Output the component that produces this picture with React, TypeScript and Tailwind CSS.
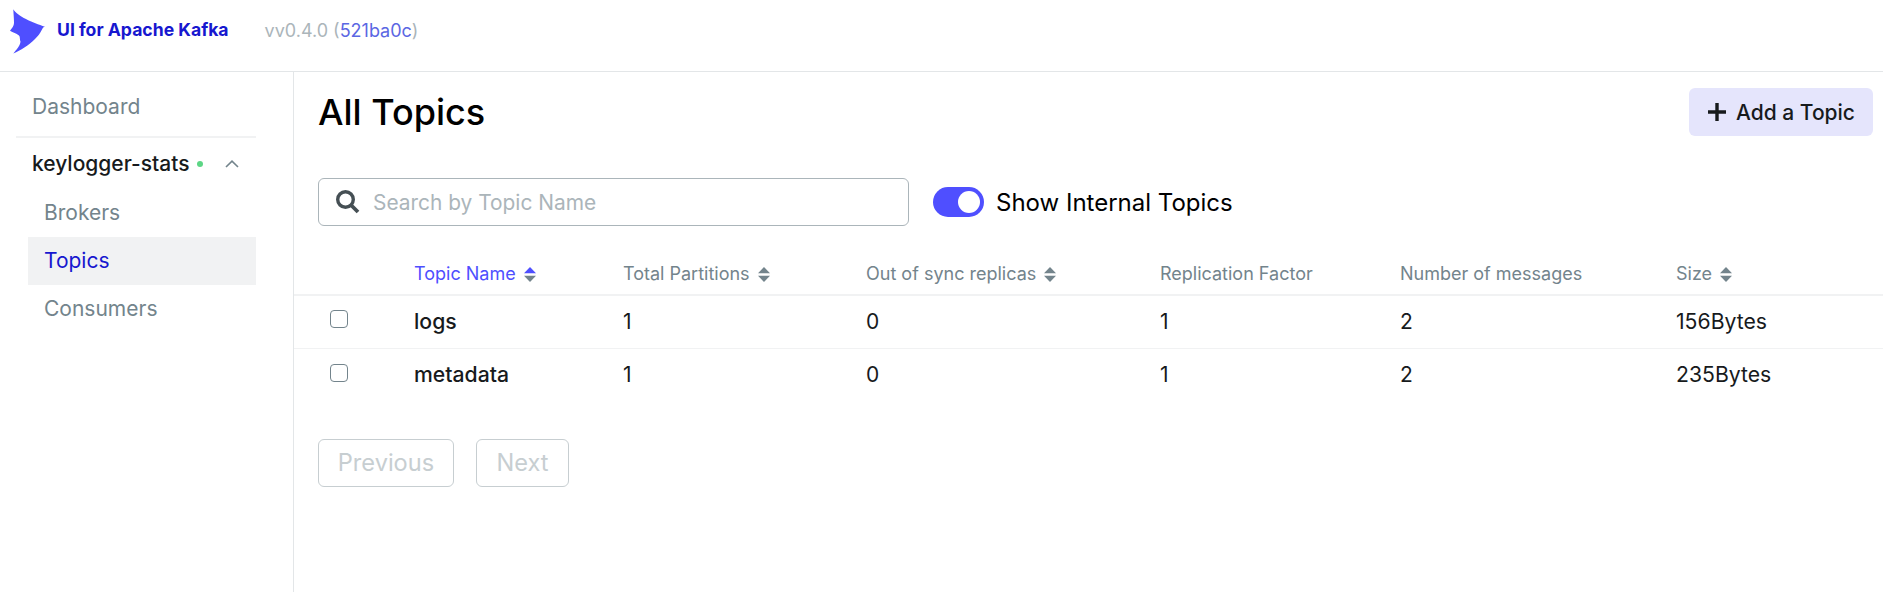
import React from "react";

const F = "[font-family:Inter,'Liberation_Sans',sans-serif]";

function Sort({ active }: { active?: boolean }) {
  return (
    <svg width="12" height="15" viewBox="0 0 12 15" className="ml-[8px] shrink-0">
      <path d="M6 0 L12 6.3 H0 Z" fill={active ? "#4f4fff" : "#73848c"} />
      <path d="M6 15 L12 8.7 H0 Z" fill="#73848c" />
    </svg>
  );
}

function Head({ children, sort, active }: { children: React.ReactNode; sort?: boolean; active?: boolean }) {
  return (
    <div className={`flex items-center text-[18px] leading-[24px] ${active ? "text-[#4f4fff]" : "text-[#73848c]"}`}>
      {children}
      {sort && <Sort active={active} />}
    </div>
  );
}

const cols = "grid grid-cols-[120px_209px_243px_294px_240px_276px_1fr] items-center";

function Row({ name, size, border }: { name: string; size: string; border?: boolean }) {
  return (
    <div className={`${cols} h-[53px] pb-[1px] text-[21px] text-[#171a1c] ${border ? "border-b border-[#f1f2f3]" : ""}`}>
      <div className="pl-[36px] pb-[5px]">
        <div className="w-[18px] h-[18px] rounded-[4px] border-[1.5px] border-[#73848c] bg-white" />
      </div>
      <div className="font-[450] text-[21.2px]">{name}</div>
      <div>1</div>
      <div>0</div>
      <div>1</div>
      <div>2</div>
      <div className="text-[21.2px]">{size}</div>
    </div>
  );
}

export default function App() {
  return (
    <div className={`${F} h-[592px] w-full bg-white flex flex-col overflow-hidden`}>
      <header className="h-[72px] shrink-0 border-b border-[#e3e6e8] flex items-center">
        <svg width="40" height="48" viewBox="0 0 40 48" className="ml-[9px] mt-[-11px] shrink-0">
          <path
            d="M4.3 3.3 C8 10 24 17 36 20.7 C33.5 21.5 34 22 33 23.5 C31 27.5 29 30 26 33 C19 40 12 44 4.3 47.5 C7 44 11 40 11.5 35.7 C10.5 32 11.3 30 9.3 29 C7 27 3 26 1 24.7 C3 22 5 20 5 17 C5 12 4.5 8 4.3 3.3 Z"
            fill="#4f4fff"
          />
        </svg>
        <span className="ml-[8px] mb-[10px] text-[17.6px] font-bold text-[#1717cf]">UI for Apache Kafka</span>
        <span className="ml-[36px] mb-[10px] text-[18px] text-[#abb5ba]">
          vv0.4.0 <span>(</span>
          <span className="text-[#5b67e3]">521ba0c</span>)
        </span>
      </header>

      <div className="flex flex-1 min-h-0">
        <aside className="w-[294px] shrink-0 border-r border-[#e3e6e8] pt-[10px] px-[16px] pr-[37px]">
          <div className="h-[48px] flex items-center pl-[16px] pt-[2px] text-[21px] text-[#73848c]">Dashboard</div>
          <div className="mt-[6px] h-[2px] bg-[#f1f2f3]" />
          <div className="mt-[2px] h-[48px] flex items-center pl-[16px] pb-[1px] text-[21px] font-[450] text-[#171a1c]">
            keylogger-stats
            <span className="ml-[8px] w-[6px] h-[6px] rounded-full bg-[#5cd685]" />
            <svg width="14" height="8" viewBox="0 0 14 8" className="ml-[22px]" fill="none">
              <path d="M1 7 L7 1.2 L13 7" stroke="#73848c" strokeWidth="1.6" />
            </svg>
          </div>
          <div className="ml-[12px] mt-[1px]">
            <div className="h-[48px] flex items-center pl-[16px] text-[21px] text-[#73848c]">Brokers</div>
            <div className="h-[48px] flex items-center pl-[16px] text-[21px] text-[#1717cf] bg-[#f1f2f3]">Topics</div>
            <div className="h-[48px] flex items-center pl-[16px] text-[21px] text-[#73848c]">Consumers</div>
          </div>
        </aside>

        <main className="flex-1 min-w-0">
          <div className="flex items-center justify-between pl-[24px] pr-[10px] pt-[16px]">
            <h1 className="text-[36px] leading-[48px] font-[450] text-black">All Topics</h1>
            <button className="h-[48px] w-[184px] rounded-[6px] bg-[#e5e5fc] flex items-center pl-[18px] pt-[2px] text-[21px] font-[450] text-[#171a1c]">
              <svg width="20" height="20" viewBox="0 0 20 20" className="mr-[9px] mt-[-2px]">
                <path d="M10 1 V19 M1 10 H19" stroke="#171a1c" strokeWidth="3.4" />
              </svg>
              Add a Topic
            </button>
          </div>

          <div className="flex items-center pl-[24px] mt-[42px]">
            <div className="relative w-[591px] h-[48px] rounded-[6px] border border-[#abb5ba] flex items-center pl-[54px] pt-[2px] text-[20.9px] text-[#abb5ba]">
              <svg width="25" height="25" viewBox="0 0 25 25" className="absolute left-[16px] top-[10px]" fill="none">
                <circle cx="10.5" cy="10.5" r="7.8" stroke="#454f54" strokeWidth="3.4" />
                <path d="M16.5 16.5 L23 23" stroke="#454f54" strokeWidth="3.8" />
              </svg>
              Search by Topic Name
            </div>
            <div className="ml-[24px] w-[51px] h-[30px] rounded-full bg-[#4f4fff] relative">
              <div className="absolute right-[4px] top-[4px] w-[22px] h-[22px] rounded-full bg-white" />
            </div>
            <span className="ml-[12px] pt-[2px] text-[24px] text-black">Show Internal Topics</span>
          </div>

          <div className={`${cols} mt-[24px] h-[46px] pt-[4px] border-b-2 border-[#f1f2f3]`}>
            <div />
            <Head sort active>Topic Name</Head>
            <Head sort>Total Partitions</Head>
            <Head sort>Out of sync replicas</Head>
            <Head>Replication Factor</Head>
            <Head>Number of messages</Head>
            <Head sort>Size</Head>
          </div>
          <Row name="logs" size="156Bytes" border />
          <Row name="metadata" size="235Bytes" />

          <div className="flex gap-[22px] pl-[24px] mt-[37px]">
            <button disabled className="w-[136px] h-[48px] rounded-[6px] border border-[#c7ced1] text-[23.6px] font-normal text-[#c7ced1] bg-white">
              Previous
            </button>
            <button disabled className="w-[93px] h-[48px] rounded-[6px] border border-[#c7ced1] text-[23.6px] font-normal text-[#c7ced1] bg-white">
              Next
            </button>
          </div>
        </main>
      </div>
    </div>
  );
}
